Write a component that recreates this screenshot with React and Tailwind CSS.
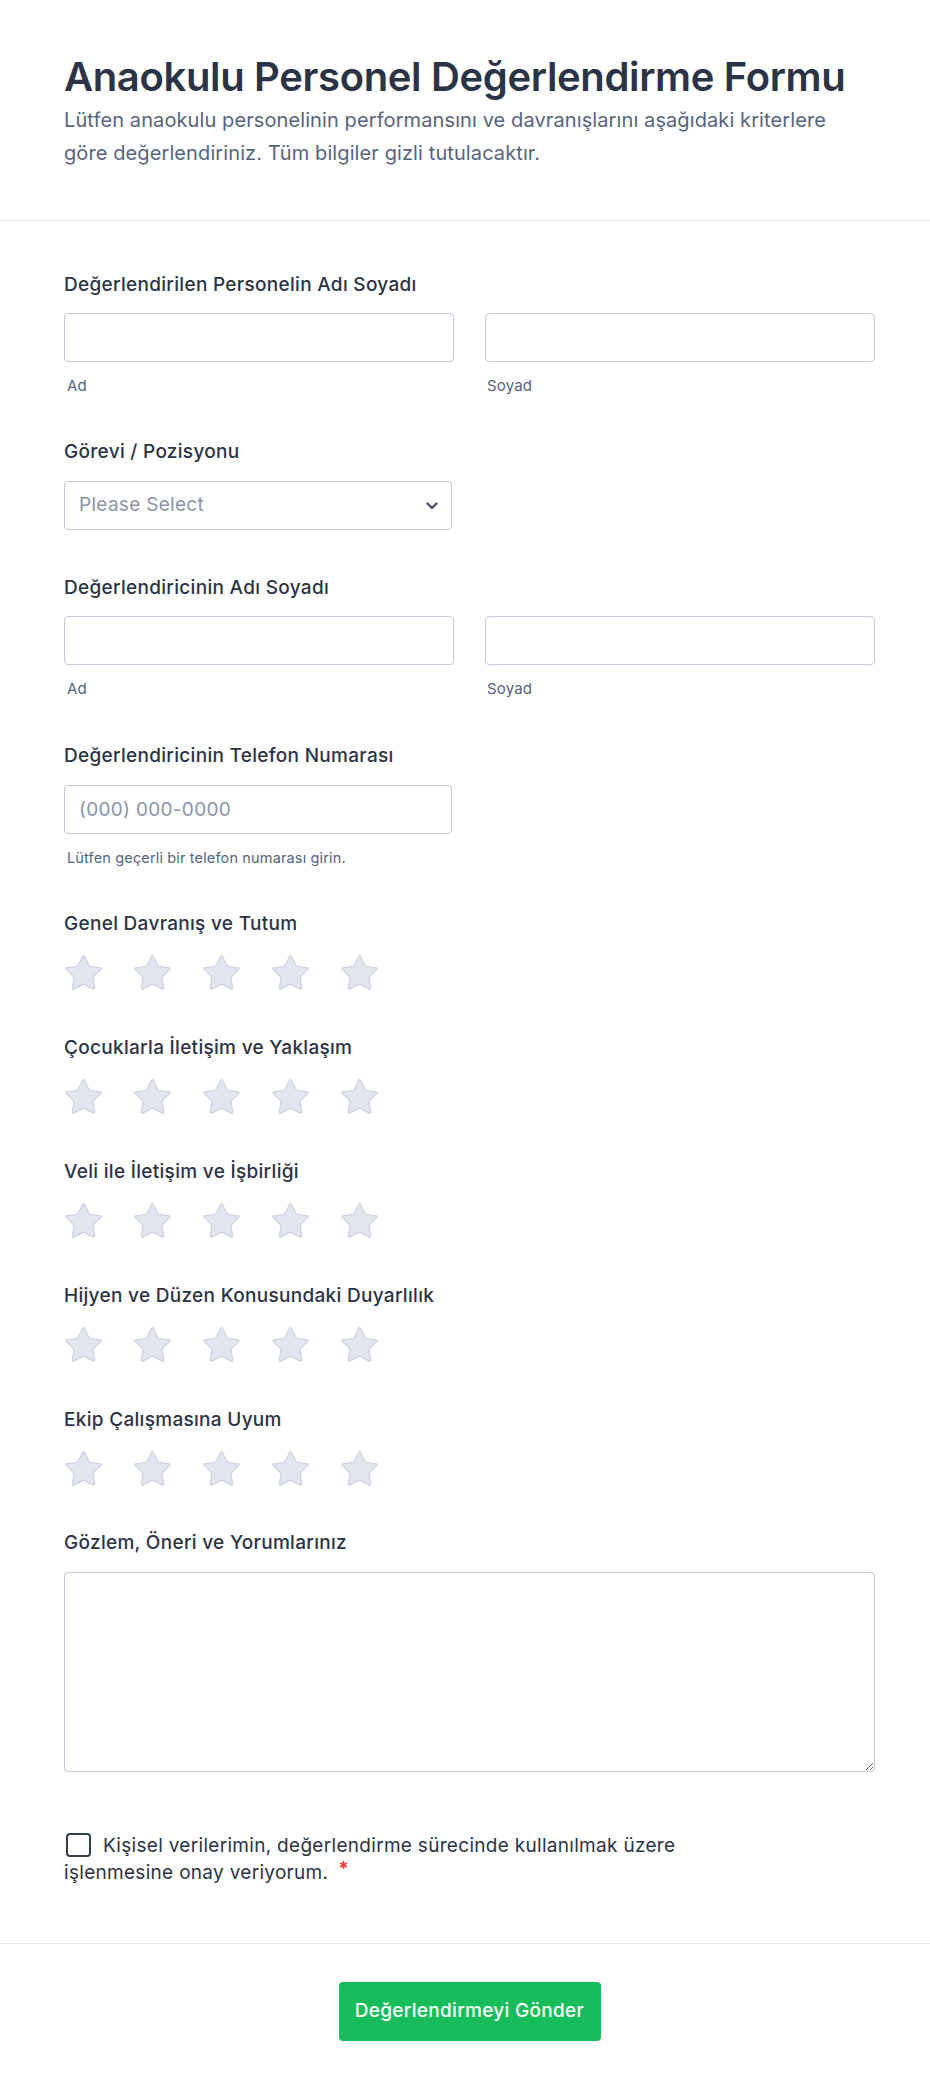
import React, { useState } from "react";

const ratings = [
  "Genel Davranış ve Tutum",
  "Çocuklarla İletişim ve Yaklaşım",
  "Veli ile İletişim ve İşbirliği",
  "Hijyen ve Düzen Konusundaki Duyarlılık",
  "Ekip Çalışmasına Uyum",
];

function Star() {
  return (
    <svg viewBox="1.6 1.6 20.8 19.9" className="w-[37px] h-[35px]">
      <path
        d="M11.525 2.295a.53.53 0 0 1 .95 0l2.31 4.679a2.123 2.123 0 0 0 1.595 1.16l5.166.756a.53.53 0 0 1 .294.904l-3.736 3.638a2.123 2.123 0 0 0-.611 1.878l.882 5.14a.53.53 0 0 1-.771.56l-4.618-2.428a2.122 2.122 0 0 0-1.973 0L6.396 21.01a.53.53 0 0 1-.77-.56l.881-5.139a2.122 2.122 0 0 0-.611-1.879L2.16 9.795a.53.53 0 0 1 .294-.906l5.165-.755a2.122 2.122 0 0 0 1.597-1.16z"
        fill="#e3e6ef"
        stroke="#cdd2dd"
        strokeWidth="0.7"
        strokeLinejoin="round"
      />
    </svg>
  );
}

function Label({ children }) {
  return (
    <p className="text-[19px] leading-[27px] font-medium tracking-[0.3px] text-[#2c3345]">
      {children}
    </p>
  );
}

function NameField({ label }) {
  return (
    <div>
      <Label>{label}</Label>
      <div className="grid grid-cols-2 gap-[31px] mt-[15px]">
        <div>
          <input className="w-full h-[49px] border border-[#c3cad8] rounded-[4px] px-3 outline-none" />
          <p className="mt-[14px] text-[15px] leading-[20px] tracking-[0.15px] text-[#57647e] pl-[3px]">Ad</p>
        </div>
        <div>
          <input className="w-full h-[49px] border border-[#c3cad8] rounded-[4px] px-3 outline-none" />
          <p className="mt-[14px] text-[15px] leading-[20px] tracking-[0.15px] text-[#57647e] pl-[2px]">Soyad</p>
        </div>
      </div>
    </div>
  );
}

export default function App() {
  const [agree, setAgree] = useState(false);

  return (
    <div className="bg-white min-h-screen font-['Inter',sans-serif] text-[#2c3345]">
      {/* Header */}
      <div className="pl-16 pr-[55px] pt-[53px] pb-[50px] border-b border-[#e3e8ee]">
        <h1 className="text-[40px] leading-[48px] font-semibold text-[#2c3345] tracking-[-0.35px]">
          Anaokulu Personel Değerlendirme Formu
        </h1>
        <p className="mt-[3px] text-[20px] leading-[33px] tracking-[0.1px] text-[#57647e] max-w-[770px]">
          Lütfen anaokulu personelinin performansını ve davranışlarını aşağıdaki kriterlere göre değerlendiriniz. Tüm bilgiler gizli tutulacaktır.
        </p>
      </div>

      {/* Form */}
      <div className="pl-16 pr-[55px] pt-[50px] pb-[57px] flex flex-col">
        <NameField label="Değerlendirilen Personelin Adı Soyadı" />

        <div className="mt-[42px]">
          <Label>Görevi / Pozisyonu</Label>
          <div className="relative w-[388px] mt-[16px]">
            <div className="h-[49px] border border-[#c3cad8] rounded-[4px] flex items-center pl-[14px] text-[19px] tracking-[0.3px] text-[#8c94a6]">
              Please Select
            </div>
            <svg
              viewBox="0 0 12 8"
              className="absolute right-[14px] top-[21px] w-[12px] h-[8px]"
            >
              <path d="M1.5 1.5 6 6l4.5-4.5" fill="none" stroke="#4a5366" strokeWidth="2.4" strokeLinecap="round" strokeLinejoin="round" />
            </svg>
          </div>
        </div>

        <div className="mt-[44px]">
          <NameField label="Değerlendiricinin Adı Soyadı" />
        </div>

        <div className="mt-[43px]">
          <Label>Değerlendiricinin Telefon Numarası</Label>
          <input
            placeholder="(000) 000-0000"
            className="mt-[16px] w-[388px] h-[49px] border border-[#c3cad8] rounded-[4px] px-[14px] text-[19px] tracking-[0.3px] placeholder-[#8c94a6] outline-none"
          />
          <p className="mt-[14px] text-[14.5px] leading-[20px] tracking-[0.15px] text-[#57647e] pl-[3px]">
            Lütfen geçerli bir telefon numarası girin.
          </p>
        </div>

        {ratings.map((r, i) => (
          <div key={i} className={i === 0 ? "mt-[42px]" : "mt-[44px]"}>
            <Label>{r}</Label>
            <div className="flex gap-[32px] mt-[18px] pl-[1px]">
              {[0, 1, 2, 3, 4].map((s) => (
                <Star key={s} />
              ))}
            </div>
          </div>
        ))}

        <div className="mt-[43px]">
          <Label>Gözlem, Öneri ve Yorumlarınız</Label>
          <textarea className="mt-[16px] w-full h-[200px] border border-[#c3cad8] rounded-[4px] p-3 outline-none block" />
        </div>

        <div className="mt-[60px] max-w-[660px] text-[19px] leading-[27px] tracking-[0.3px] text-[#2c3345]">
          <span
            onClick={() => setAgree(!agree)}
            className="inline-block align-[-5px] w-[25px] h-[24px] ml-[2px] mr-[12px] border-2 border-[#343c4f] rounded-[4px] bg-white"
          />
          Kişisel verilerimin, değerlendirme sürecinde kullanılmak üzere işlenmesine onay veriyorum.
          <span className="text-[#f23a3c] font-bold ml-[10px] relative -top-[4px]">*</span>
        </div>
      </div>

      {/* Footer */}
      <div className="border-t border-[#e3e8ee] pt-[38px] pb-[50px] pl-16 pr-[55px] flex justify-center">
        <button className="w-[262px] h-[59px] bg-[#18bd5b] rounded-[4px] text-white text-[19px] tracking-[0.3px] font-medium">
          Değerlendirmeyi Gönder
        </button>
      </div>
    </div>
  );
}
